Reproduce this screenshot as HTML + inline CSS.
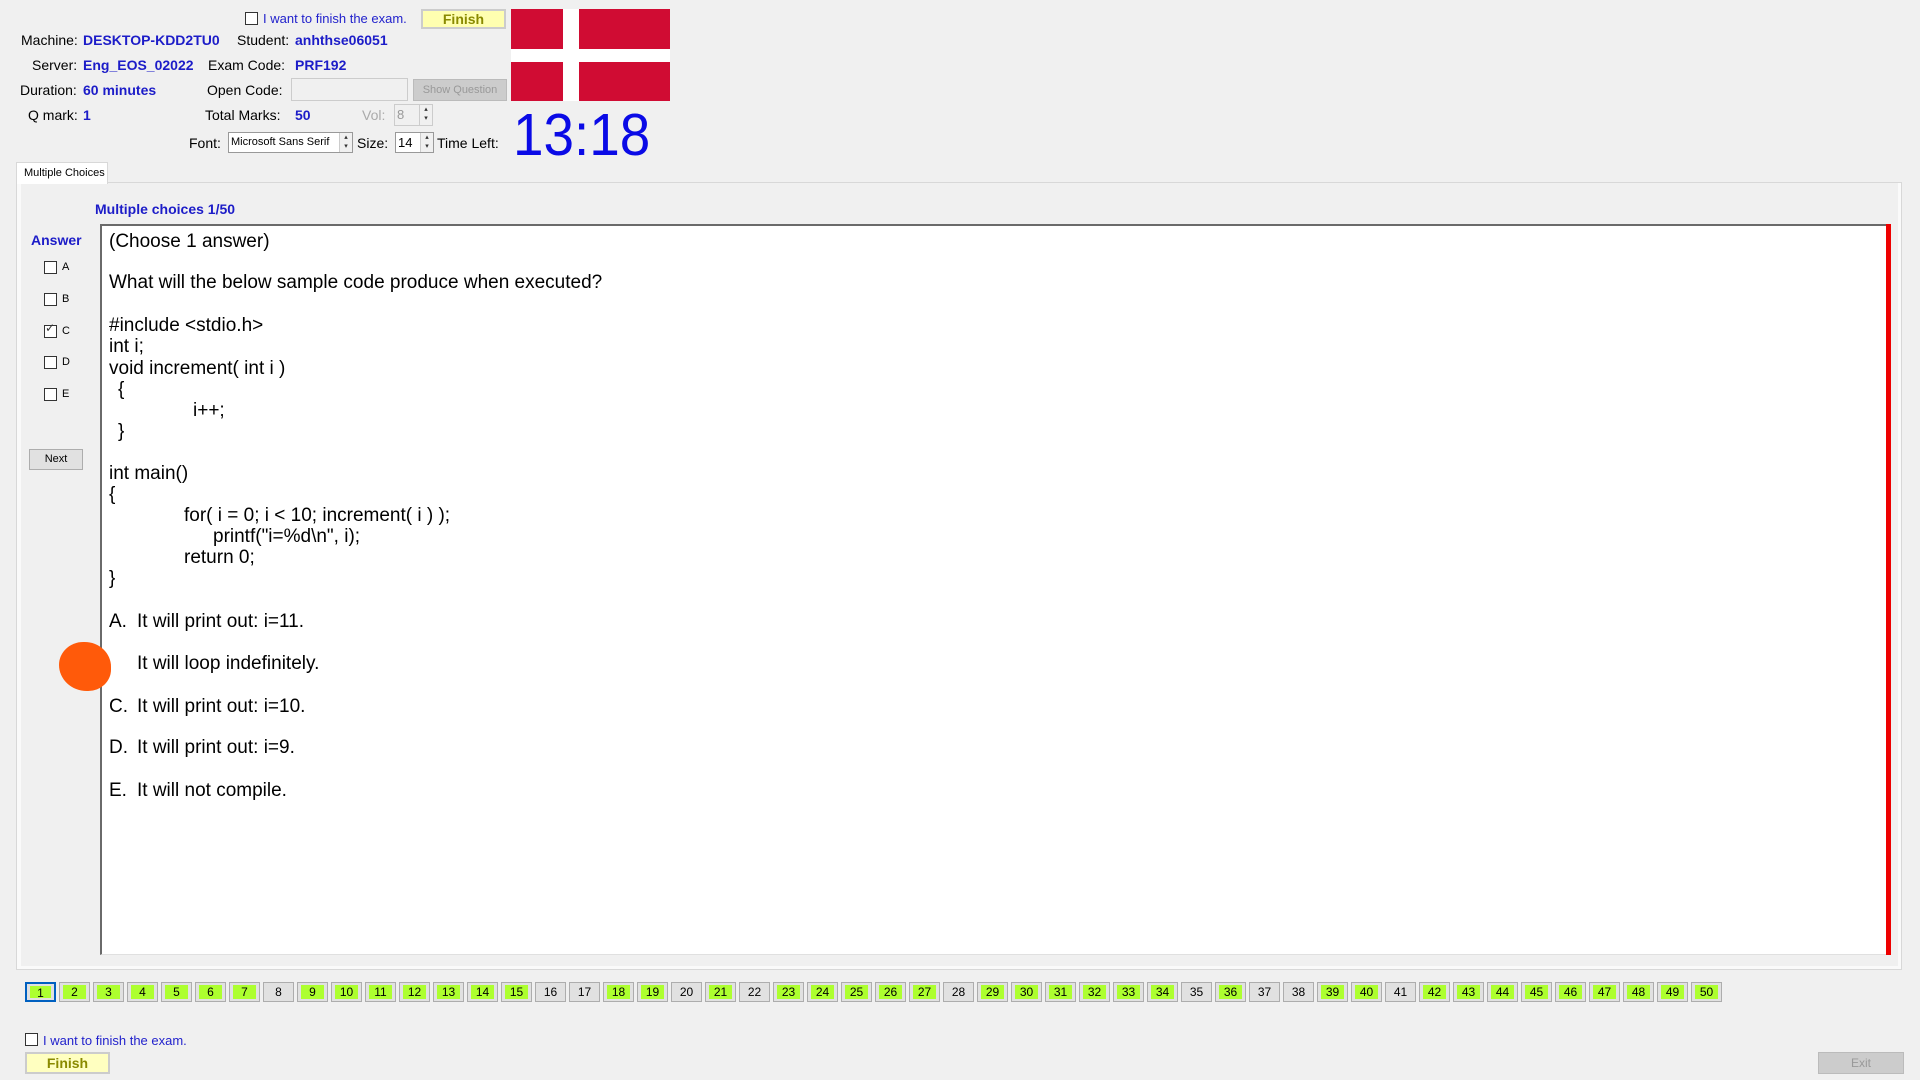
<!DOCTYPE html>
<html><head><meta charset="utf-8"><style>
*{margin:0;padding:0;box-sizing:border-box}
body{width:1920px;height:1080px;background:#f0f0f0;position:relative;overflow:hidden;font-family:"Liberation Sans",Arial,sans-serif;font-size:14px;color:#000}
.a{position:absolute;white-space:nowrap}
.lb{position:absolute;white-space:nowrap;font-size:14px;line-height:16px;transform:translateY(-8px)}
.v{color:#1c1cc8;font-weight:bold}
.cb{position:absolute;width:13px;height:13px;border:1px solid #333;background:#fff}
.q{position:absolute;left:109px;font-size:19px;line-height:22px;transform:translateY(-11px);white-space:nowrap}
.nb{position:absolute;top:982px;width:31px;height:20px;border:1px solid #adadad;background:#e1e1e1;font-size:12px;text-align:center;line-height:18px}
.nb.g span{position:absolute;left:3px;top:2px;right:3px;bottom:2px;background:#adff2f;line-height:14px}
.nb span{position:absolute;left:0;right:0;top:0;bottom:0}
.spin{position:absolute;width:13px;border-left:1px solid #ccc;background:#f0f0f0;font-size:7px;line-height:9px;text-align:center;color:#333}
</style></head><body>
<!-- top -->
<div class="cb" style="left:245px;top:12px"></div>
<div class="lb" style="left:263px;top:19px;color:#2222cc;font-size:13px">I want to finish the exam.</div>
<div class="a" style="left:421px;top:9px;width:85px;height:20px;background:#ffffb0;border:2px solid #ccc;color:#8a8a00;font-weight:bold;font-size:14px;text-align:center;line-height:16px">Finish</div>
<div class="a" style="left:511px;top:9px;width:159px;height:92px;background:#d00c33"></div>
<div class="a" style="left:563px;top:9px;width:16px;height:92px;background:#fff"></div>
<div class="a" style="left:511px;top:49px;width:159px;height:13px;background:#fff"></div>

<div class="lb" style="left:21px;top:40px">Machine:</div><div class="lb v" style="left:83px;top:40px">DESKTOP-KDD2TU0</div>
<div class="lb" style="left:237px;top:40px">Student:</div><div class="lb v" style="left:295px;top:40px">anhthse06051</div>
<div class="lb" style="left:32px;top:65px">Server:</div><div class="lb v" style="left:83px;top:65px">Eng_EOS_02022</div>
<div class="lb" style="left:208px;top:65px">Exam Code:</div><div class="lb v" style="left:295px;top:65px">PRF192</div>
<div class="lb" style="left:20px;top:90px">Duration:</div><div class="lb v" style="left:83px;top:90px">60 minutes</div>
<div class="lb" style="left:207px;top:90px">Open Code:</div>
<div class="a" style="left:291px;top:78px;width:117px;height:23px;border:1px solid #ccc;background:#f0f0f0"></div>
<div class="a" style="left:413px;top:79px;width:94px;height:22px;background:#ccc;border:1px solid #bbb;color:#999;font-size:11px;text-align:center;line-height:20px">Show Question</div>
<div class="lb" style="left:28px;top:115px">Q mark:</div><div class="lb v" style="left:83px;top:115px">1</div>
<div class="lb" style="left:205px;top:115px">Total Marks:</div><div class="lb v" style="left:295px;top:115px">50</div>
<div class="lb" style="left:362px;top:115px;color:#aaa">Vol:</div>
<div class="a" style="left:394px;top:104px;width:39px;height:22px;border:1px solid #ccc;color:#999;font-size:13px;padding-left:2px;line-height:20px">8<div class="spin" style="right:0;top:0;height:20px">▴<br>▾</div></div>
<div class="lb" style="left:189px;top:143px">Font:</div>
<div class="a" style="left:228px;top:132px;width:125px;height:21px;border:1px solid #999;background:#fff;font-size:11px;padding-left:2px;line-height:19px">Microsoft Sans Serif<div class="spin" style="right:0;top:0;height:19px">▴<br>▾</div></div>
<div class="lb" style="left:357px;top:143px">Size:</div>
<div class="a" style="left:395px;top:132px;width:39px;height:21px;border:1px solid #999;background:#fff;font-size:13px;padding-left:2px;line-height:19px">14<div class="spin" style="right:0;top:0;height:19px">▴<br>▾</div></div>
<div class="lb" style="left:437px;top:143px">Time Left:</div>
<div class="a" style="left:513px;top:100px;font-size:59px;line-height:70px;color:#0a0ae6;transform:scaleX(0.93);transform-origin:left">13:18</div>

<!-- tab -->
<div class="a" style="left:16px;top:182px;width:1886px;height:788px;border:1px solid #d8d8d8;border-top-color:#d8d8d8;background:#f0f0f0"></div>
<div class="a" style="left:17px;top:183px;width:1884px;height:786px;border:3px solid #fafafa;border-top:none;border-left-width:4px"></div>
<div class="a" style="left:16px;top:162px;width:92px;height:22px;background:#fff;border:1px solid #d8d8d8;border-bottom:none;font-size:11px;line-height:20px;padding-left:7px">Multiple Choices</div>

<div class="lb v" style="left:95px;top:209px;font-size:14px">Multiple choices 1/50</div>
<div class="lb v" style="left:31px;top:240px;font-size:14px">Answer</div>
<div class="cb" style="left:44px;top:261px"></div><div class="lb" style="left:62px;top:267px;font-size:11px">A</div>
<div class="cb" style="left:44px;top:293px"></div><div class="lb" style="left:62px;top:299px;font-size:11px">B</div>
<div class="cb" style="left:44px;top:325px"></div><div class="a" style="left:45px;top:321px;font-size:12px;color:#333">✓</div><div class="lb" style="left:62px;top:331px;font-size:11px">C</div>
<div class="cb" style="left:44px;top:356px"></div><div class="lb" style="left:62px;top:362px;font-size:11px">D</div>
<div class="cb" style="left:44px;top:388px"></div><div class="lb" style="left:62px;top:394px;font-size:11px">E</div>
<div class="a" style="left:29px;top:449px;width:54px;height:21px;background:#e1e1e1;border:1px solid #adadad;font-size:11px;text-align:center;line-height:19px">Next</div>

<!-- question -->
<div class="a" style="left:100px;top:224px;width:1786px;height:731px;background:#fff;border-left:2px solid #6a6a6a;border-top:2px solid #6a6a6a;border-bottom:1px solid #e0e0e0"></div>
<div class="a" style="left:1886px;top:224px;width:5px;height:731px;background:#ee0000"></div>
<div class="q" style="top:242px">(Choose 1 answer)</div>
<div class="q" style="top:283px">What will the below sample code produce when executed?</div>
<div class="q" style="top:326px">#include &lt;stdio.h&gt;</div>
<div class="q" style="top:347px">int i;</div>
<div class="q" style="top:369px">void increment( int i )</div>
<div class="q" style="top:390px;left:118px">{</div>
<div class="q" style="top:411px;left:193px">i++;</div>
<div class="q" style="top:432px;left:118px">}</div>
<div class="q" style="top:474px">int main()</div>
<div class="q" style="top:495px">{</div>
<div class="q" style="top:516px;left:184px">for( i = 0; i &lt; 10; increment( i ) );</div>
<div class="q" style="top:537px;left:213px">printf("i=%d\n", i);</div>
<div class="q" style="top:558px;left:184px">return 0;</div>
<div class="q" style="top:579px">}</div>
<div class="q" style="top:622px">A.</div><div class="q" style="top:622px;left:137px">It will print out: i=11.</div>
<div class="q" style="top:664px;left:137px">It will loop indefinitely.</div>
<div class="q" style="top:707px">C.</div><div class="q" style="top:707px;left:137px">It will print out: i=10.</div>
<div class="q" style="top:748px">D.</div><div class="q" style="top:748px;left:137px">It will print out: i=9.</div>
<div class="q" style="top:791px">E.</div><div class="q" style="top:791px;left:137px">It will not compile.</div>
<div class="a" style="left:59px;top:642px;width:52px;height:49px;background:#ff5a0a;border-radius:48% 52% 45% 55%"></div>

<!-- numbers -->
<div id="nums"></div>
<script>
var grey=[8,16,17,20,22,28,35,37,38,41],h='';
for(var i=1;i<=50;i++){var x=25+(i-1)*34;var g=grey.indexOf(i)<0;
h+='<div class="nb'+(g?' g':'')+'" style="left:'+x+'px'+(i==1?';border:2px solid #0060c0':'')+'"><span>'+i+'</span></div>';}
document.getElementById('nums').innerHTML=h;
</script>

<div class="cb" style="left:25px;top:1033px"></div>
<div class="lb" style="left:43px;top:1041px;color:#2222cc;font-size:13px">I want to finish the exam.</div>
<div class="a" style="left:25px;top:1052px;width:85px;height:22px;background:#ffffc0;border:2px solid #ccc;color:#8a8a00;font-weight:bold;font-size:14px;text-align:center;line-height:18px">Finish</div>
<div class="a" style="left:1818px;top:1052px;width:86px;height:22px;background:#ccc;border:1px solid #bbb;color:#999;font-size:12px;text-align:center;line-height:20px">Exit</div>
</body></html>
